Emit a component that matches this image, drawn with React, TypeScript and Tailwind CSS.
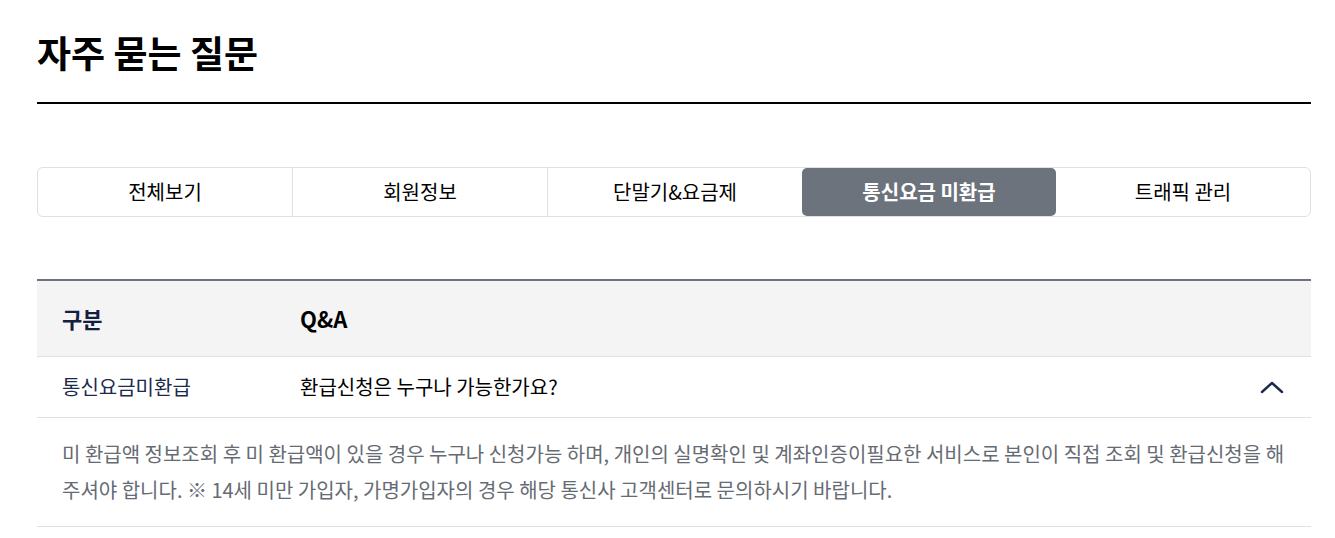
import { useState } from 'react';

const TABS = ['전체보기', '회원정보', '단말기&요금제', '통신요금 미환급', '트래픽 관리'];

export default function App() {
    const [active, setActive] = useState(3);
    const [open, setOpen] = useState(true);

    return (
        <div className="min-h-screen bg-white pl-[37px] pr-[24px] pt-[28px] text-black [font-family:'Noto_Sans_CJK_KR','Noto_Sans',sans-serif]">
            <h1 className="pb-[26px] text-[37px] font-bold leading-[48px]">자주 묻는 질문</h1>
            <div className="h-[2px] bg-black" />

            <div className="mt-[63px] flex h-[50px] rounded-[6px] border border-[#dde1e6]">
                {TABS.map((tab, i) => (
                    <button
                        key={tab}
                        type="button"
                        onClick={() => setActive(i)}
                        className={`flex flex-1 items-center justify-center text-[20px] ${
                            i === active
                                ? 'rounded-[5px] bg-[#6c737c] font-bold text-white'
                                : 'text-black'
                        } ${i > 0 && i !== active && i - 1 !== active ? 'border-l border-[#dde1e6]' : ''}`}
                    >
                        {tab}
                    </button>
                ))}
            </div>

            <div className="mt-[62px] border-t-2 border-[#6c737c]">
                <div className="flex h-[76px] items-center border-b border-[#dde1e6] bg-[#f4f4f4] text-[22px] font-bold">
                    <div className="w-[263px] pl-[25px] text-[#15203f]">구분</div>
                    <div className="flex-1">Q&amp;A</div>
                </div>
                <button
                    type="button"
                    onClick={() => setOpen(!open)}
                    className="flex h-[61px] w-full items-center border-b border-[#dde1e6] text-left text-[20px]"
                >
                    <div className="w-[263px] pl-[25px] text-[#1c2a4c]">통신요금미환급</div>
                    <div className="flex-1 text-black">환급신청은 누구나 가능한가요?</div>
                    <svg
                        width="24"
                        height="14"
                        viewBox="0 0 24 14"
                        className={`mr-[27px] ${open ? '' : 'rotate-180'}`}
                        fill="none"
                        stroke="#1c2a4c"
                        strokeWidth="2.4"
                        strokeLinecap="round"
                        strokeLinejoin="round"
                    >
                        <path d="M2 12 L12 3 L22 12" />
                    </svg>
                </button>
                {open && (
                    <div className="border-b border-[#dde1e6] px-[25px] py-[18px] text-[20px] leading-[36px] text-[#666b73]">
                        미 환급액 정보조회 후 미 환급액이 있을 경우 누구나 신청가능 하며, 개인의 실명확인 및 계좌인증이필요한 서비스로
                        본인이 직접 조회 및 환급신청을 해 주셔야 합니다. ※ 14세 미만 가입자, 가명가입자의 경우 해당 통신사 고객센터로
                        문의하시기 바랍니다.
                    </div>
                )}
            </div>
        </div>
    );
}
